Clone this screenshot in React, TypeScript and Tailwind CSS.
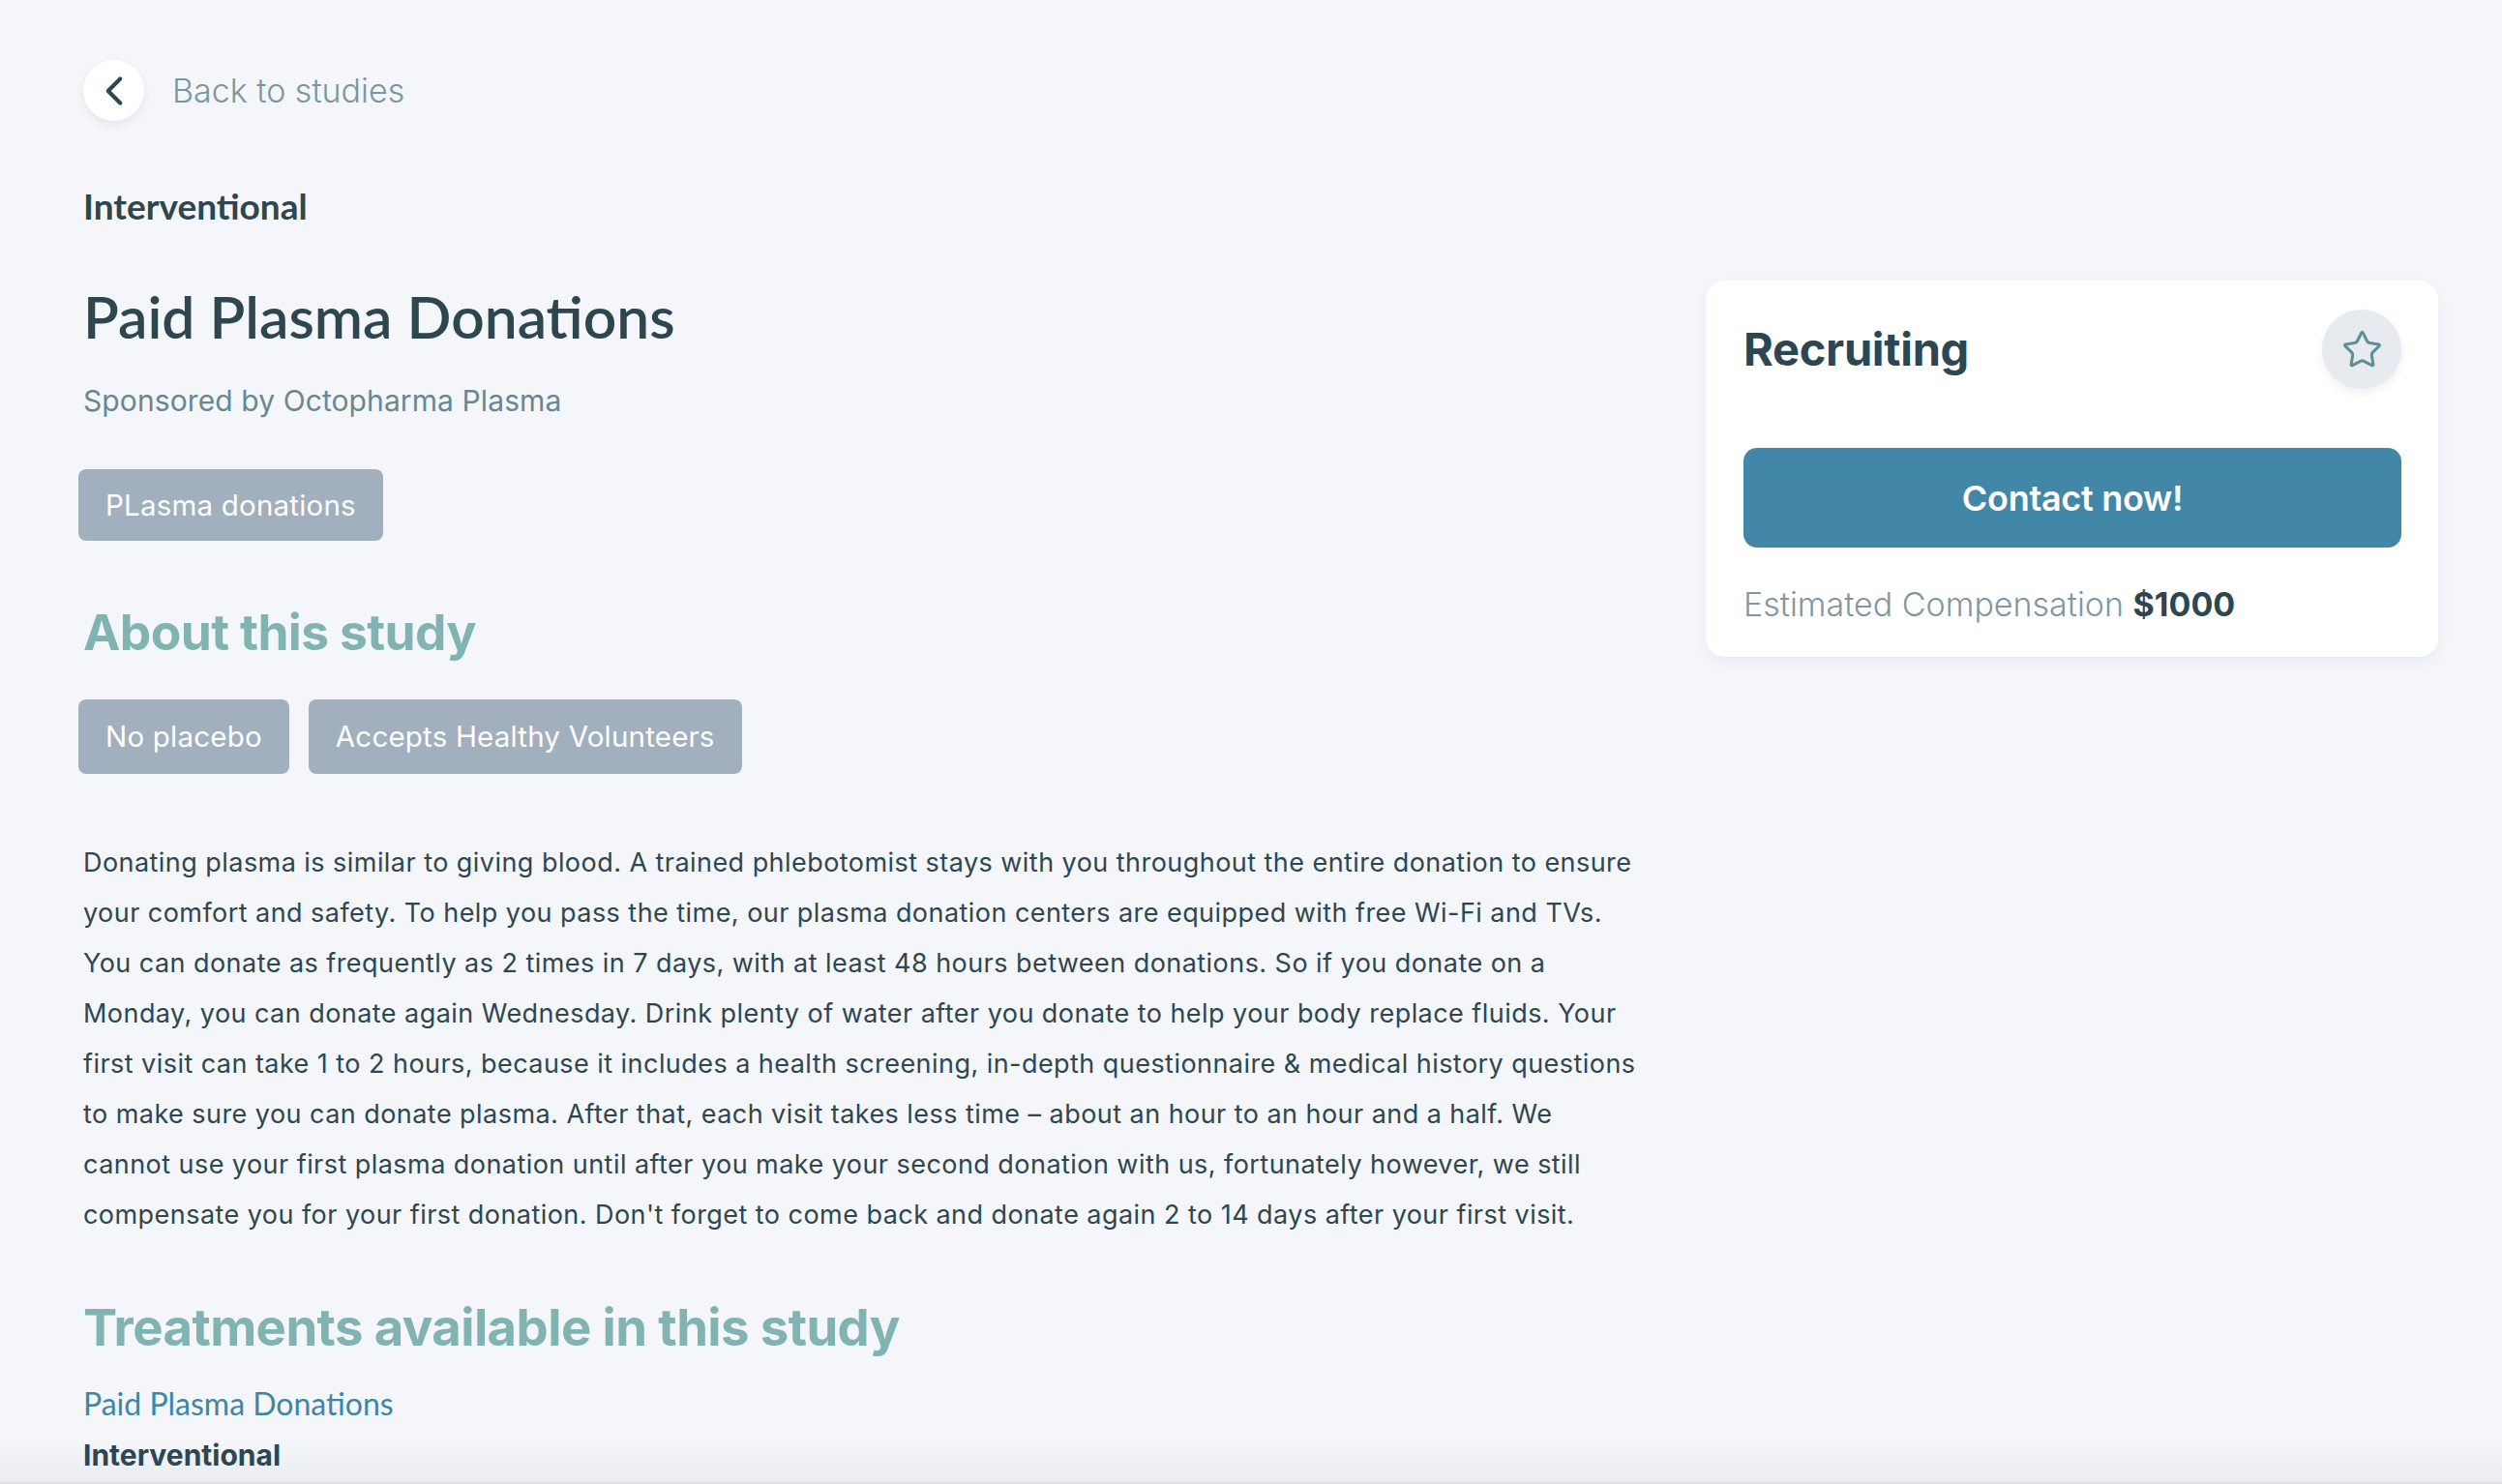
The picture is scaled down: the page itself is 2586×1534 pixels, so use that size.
import { ChevronLeft, Star } from "lucide-react";

const tags = ["No placebo", "Accepts Healthy Volunteers"];

const description =
  "Donating plasma is similar to giving blood. A trained phlebotomist stays with you throughout the entire donation to ensure your comfort and safety. To help you pass the time, our plasma donation centers are equipped with free Wi-Fi and TVs. You can donate as frequently as 2 times in 7 days, with at least 48 hours between donations. So if you donate on a Monday, you can donate again Wednesday. Drink plenty of water after you donate to help your body replace fluids. Your first visit can take 1 to 2 hours, because it includes a health screening, in-depth questionnaire & medical history questions to make sure you can donate plasma. After that, each visit takes less time – about an hour to an hour and a half. We cannot use your first plasma donation until after you make your second donation with us, fortunately however, we still compensate you for your first donation. Don't forget to come back and donate again 2 to 14 days after your first visit.";

const Tag = ({ label }: { label: string }) => (
  <span className="inline-flex items-center h-[77px] px-[28px] rounded-[8px] bg-[#a1afbe] text-white text-[29.5px] tracking-[0.2px]">
    {label}
  </span>
);

const StudyCard = () => (
  <aside className="self-start w-[757px] mt-[99px] shrink-0 rounded-[20px] bg-white pl-[39px] pr-[38px] pt-[29px] pb-[34px] shadow-[0_6px_14px_rgba(40,60,80,0.06)]">
    <div className="flex items-center justify-between h-[84px]">
      <h2 className="text-[47px] leading-[56px] font-bold text-[#2e4650] tracking-[-0.3px]">
        Recruiting
      </h2>
      <button className="w-[82px] h-[82px] rounded-full bg-[#e7ebef] flex items-center justify-center shadow-[0_4px_8px_rgba(40,60,80,0.08)]">
        <Star size={43} strokeWidth={1.7} className="text-[#5e8e98]" />
      </button>
    </div>
    <button className="mt-[60px] w-full h-[103px] rounded-[14px] bg-[#4287a8] text-white text-[36px] font-semibold tracking-[-0.3px]">
      Contact now!
    </button>
    <p className="mt-[39px] text-[34px] leading-[40px] text-[#8196a0] font-light">
      Estimated Compensation{" "}
      <span className="font-bold text-[#2e4650]">$1000</span>
    </p>
  </aside>
);

export default function App() {
  return (
    <div className="relative h-[1534px] overflow-hidden bg-[#f4f6fa] font-['Inter',sans-serif] text-[#2e4650]">
      {/* bottom fade, behind the content */}
      <div className="absolute inset-x-0 bottom-0 h-[44px] bg-linear-to-b from-[#f4f6fa00] to-[#e9ecef] border-b-[2px] border-[#dfe3e7]" />

      <div className="relative pl-[86px] pt-[62px]">
        <a href="#" className="flex items-center gap-[29px] w-fit">
          <span className="w-[63px] h-[63px] rounded-full bg-white flex items-center justify-center shadow-[0_4px_8px_rgba(40,60,80,0.08)]">
            <ChevronLeft size={50} strokeWidth={2} className="text-[#2e4650]" />
          </span>
          <span className="text-[34px] font-light text-[#7a97a1]">Back to studies</span>
        </a>

        <div className="flex gap-[65px] mt-[66px]">
          <main className="w-[1612px] shrink-0">
            <p className="font-['Lato',sans-serif] font-bold text-[37px] leading-[44px]">
              Interventional
            </p>
            <h1 className="mt-[57px] font-['Lato',sans-serif] font-semibold text-[60.5px] leading-[70px]">
              Paid Plasma Donations
            </h1>
            <p className="mt-[34px] text-[30px] leading-[36px] tracking-[0.1px] text-[#6c8690]">
              Sponsored by Octopharma Plasma
            </p>
            <div className="mt-[53px] flex -ml-[5px]">
              <span className="inline-flex items-center h-[74px] px-[28px] rounded-[8px] bg-[#a1afbe] text-white text-[29.5px] tracking-[0.2px]">
                PLasma donations
              </span>
            </div>

            <h2 className="mt-[64px] text-[51.5px] leading-[60px] font-bold text-[#80b3b2] tracking-[-0.6px]">
              About this study
            </h2>
            <div className="mt-[40px] flex gap-[20px] -ml-[5px]">
              {tags.map((t) => (
                <Tag key={t} label={t} />
              ))}
            </div>

            <p className="mt-[66px] text-[27px] leading-[52px] tracking-[0.45px]">{description}</p>

            <h2 className="mt-[60px] text-[52.7px] leading-[60px] font-bold text-[#80b3b2] tracking-[-0.6px]">
              Treatments available in this study
            </h2>
            <a href="#" className="block mt-[29px] font-['Lato',sans-serif] text-[32px] leading-[40px] text-[#3d86a5]">
              Paid Plasma Donations
            </a>
            <p className="mt-[15px] text-[30px] leading-[36px] font-bold">Interventional</p>
          </main>

          <StudyCard />
        </div>
      </div>
    </div>
  );
}
